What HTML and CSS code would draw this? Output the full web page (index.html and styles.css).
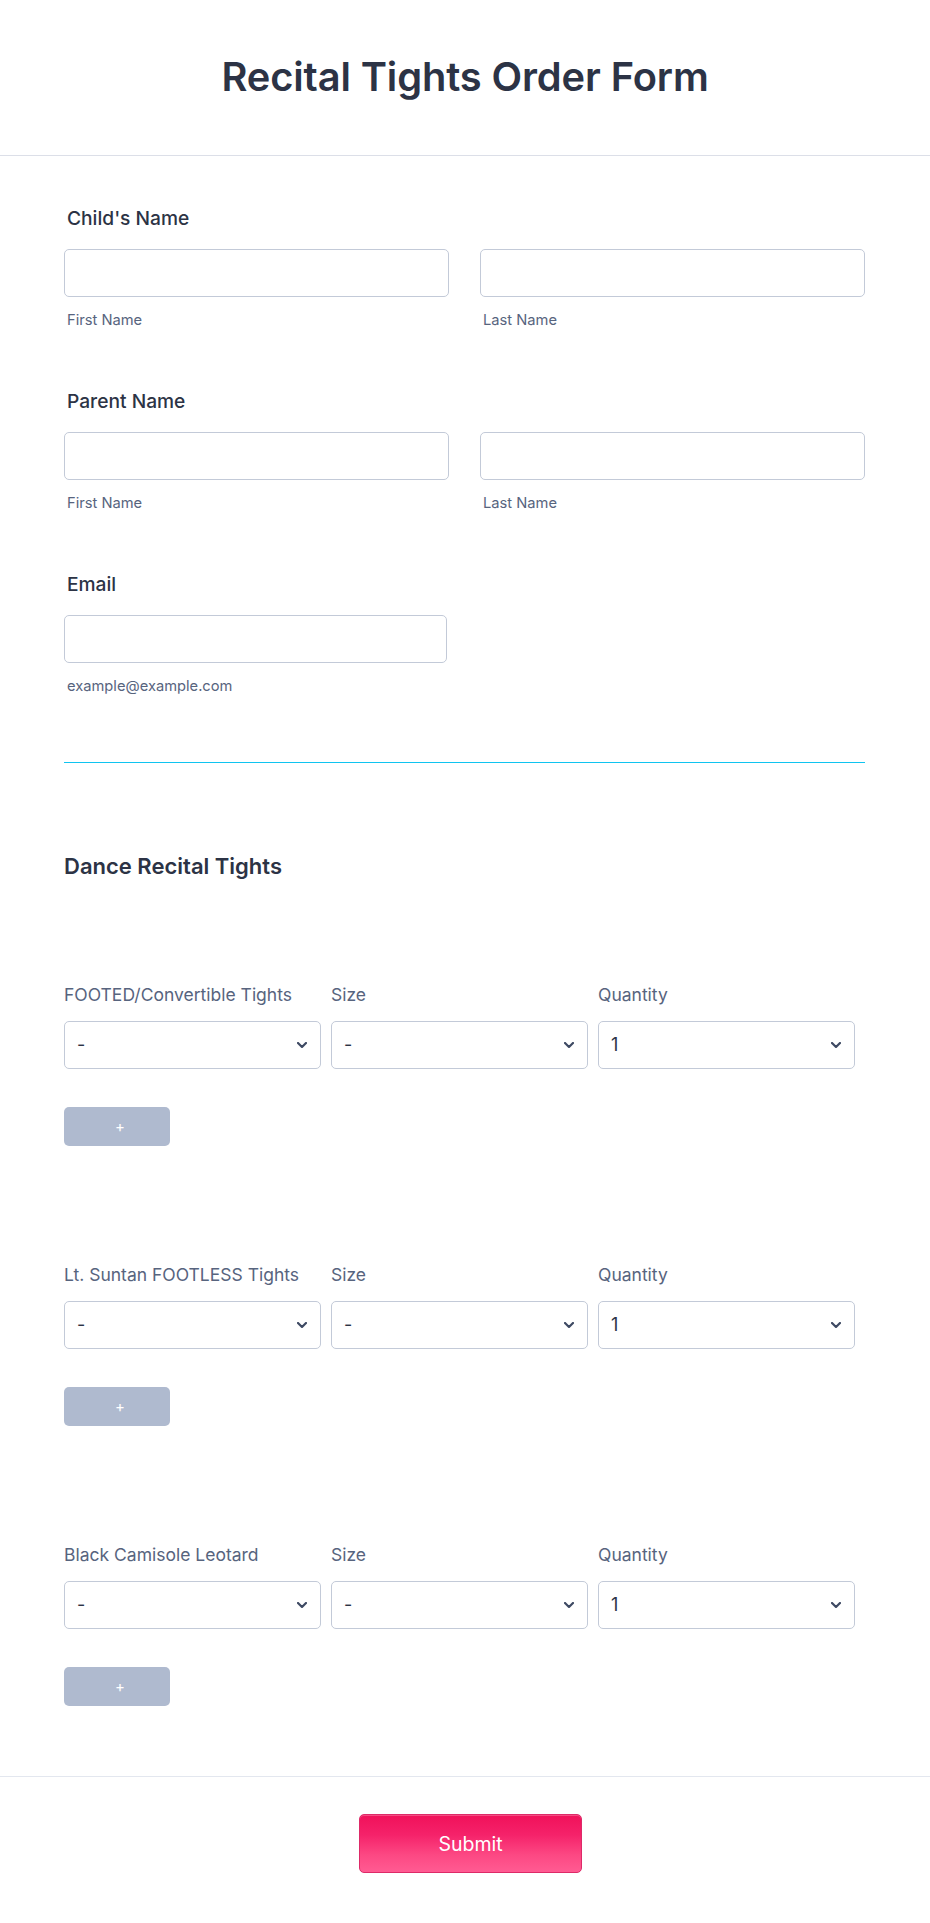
FILE: index.html
```html
<!DOCTYPE html>
<html lang="en">
<head>
<meta charset="utf-8">
<title>Recital Tights Order Form</title>
<link rel="stylesheet" href="styles.css">
</head>
<body>
<div class="page">
  <header class="header">
    <h1 class="title">Recital Tights Order Form</h1>
  </header>

  <main class="form">
    <div class="field">
      <div class="label">Child's Name</div>
      <div class="pair">
        <div class="col">
          <div class="input"></div>
          <div class="sublabel">First Name</div>
        </div>
        <div class="col">
          <div class="input"></div>
          <div class="sublabel">Last Name</div>
        </div>
      </div>
    </div>

    <div class="field">
      <div class="label">Parent Name</div>
      <div class="pair">
        <div class="col">
          <div class="input"></div>
          <div class="sublabel">First Name</div>
        </div>
        <div class="col">
          <div class="input"></div>
          <div class="sublabel">Last Name</div>
        </div>
      </div>
    </div>

    <div class="field">
      <div class="label">Email</div>
      <div class="single">
        <div class="input"></div>
        <div class="sublabel">example@example.com</div>
      </div>
    </div>

    <div class="divider"></div>

    <h2 class="section-title">Dance Recital Tights</h2>

    <div class="product">
      <div class="product-row">
        <div class="pcol">
          <div class="plabel">FOOTED/Convertible Tights</div>
          <div class="select"><span>-</span><svg class="chev" width="10" height="6" viewBox="0 0 10 6"><polyline points="1,1 5,5 9,1"/></svg></div>
        </div>
        <div class="pcol">
          <div class="plabel">Size</div>
          <div class="select"><span>-</span><svg class="chev" width="10" height="6" viewBox="0 0 10 6"><polyline points="1,1 5,5 9,1"/></svg></div>
        </div>
        <div class="pcol">
          <div class="plabel">Quantity</div>
          <div class="select"><span>1</span><svg class="chev" width="10" height="6" viewBox="0 0 10 6"><polyline points="1,1 5,5 9,1"/></svg></div>
        </div>
      </div>
      <div class="add-btn">+</div>
    </div>

    <div class="product">
      <div class="product-row">
        <div class="pcol">
          <div class="plabel">Lt. Suntan FOOTLESS Tights</div>
          <div class="select"><span>-</span><svg class="chev" width="10" height="6" viewBox="0 0 10 6"><polyline points="1,1 5,5 9,1"/></svg></div>
        </div>
        <div class="pcol">
          <div class="plabel">Size</div>
          <div class="select"><span>-</span><svg class="chev" width="10" height="6" viewBox="0 0 10 6"><polyline points="1,1 5,5 9,1"/></svg></div>
        </div>
        <div class="pcol">
          <div class="plabel">Quantity</div>
          <div class="select"><span>1</span><svg class="chev" width="10" height="6" viewBox="0 0 10 6"><polyline points="1,1 5,5 9,1"/></svg></div>
        </div>
      </div>
      <div class="add-btn">+</div>
    </div>

    <div class="product">
      <div class="product-row">
        <div class="pcol">
          <div class="plabel">Black Camisole Leotard</div>
          <div class="select"><span>-</span><svg class="chev" width="10" height="6" viewBox="0 0 10 6"><polyline points="1,1 5,5 9,1"/></svg></div>
        </div>
        <div class="pcol">
          <div class="plabel">Size</div>
          <div class="select"><span>-</span><svg class="chev" width="10" height="6" viewBox="0 0 10 6"><polyline points="1,1 5,5 9,1"/></svg></div>
        </div>
        <div class="pcol">
          <div class="plabel">Quantity</div>
          <div class="select"><span>1</span><svg class="chev" width="10" height="6" viewBox="0 0 10 6"><polyline points="1,1 5,5 9,1"/></svg></div>
        </div>
      </div>
      <div class="add-btn">+</div>
    </div>
  </main>

  <footer class="footer">
    <button class="submit" type="button">Submit</button>
  </footer>
</div>
</body>
</html>
```

FILE: styles.css
```css
* { box-sizing: border-box; }

html, body {
  margin: 0;
  padding: 0;
  background: #ffffff;
}

body {
  font-family: Inter, "Noto Sans", "Liberation Sans", sans-serif;
  color: #2c3345;
}

.page {
  width: 930px;
  min-height: 1923px;
  background: #ffffff;
}

.header {
  height: 156px;
  border-bottom: 1px solid #dcdfe8;
  display: flex;
  align-items: center;
  justify-content: center;
  padding-bottom: 2px;
}

.title {
  margin: 0;
  font-size: 39.8px;
  line-height: 48px;
  font-weight: 600;
  color: #2c3345;
  letter-spacing: -0.1px;
}

.form {
  padding: 50px 65px 0 64px;
}

.field {
  margin-bottom: 60px;
}

.label {
  font-size: 19.2px;
  line-height: 24px;
  font-weight: 500;
  color: #2c3345;
  padding-left: 3px;
  margin-bottom: 19px;
}

.pair {
  display: flex;
  gap: 31px;
}

.col {
  width: 385px;
}

.single {
  width: 383px;
}

.input {
  height: 48px;
  border: 1px solid #c3cad8;
  border-radius: 5px;
  background: #ffffff;
}

.sublabel {
  margin-top: 14px;
  font-size: 14.7px;
  line-height: 18px;
  color: #57647e;
  padding-left: 3px;
}

.divider {
  height: 1px;
  background: #10c4f0;
  margin-top: 67px;
}

.section-title {
  margin: 89px 0 0 0;
  font-size: 22px;
  line-height: 28px;
  font-weight: 600;
  color: #2c3345;
}

.product {
  margin-top: 104px;
}

.product + .product {
  margin-top: 118px;
}

.product-row {
  display: flex;
}

.pcol {
  width: 267px;
  padding-right: 10px;
}

.plabel {
  font-size: 17.5px;
  line-height: 22px;
  color: #57647e;
  white-space: nowrap;
  margin-bottom: 15px;
}

.select {
  height: 48px;
  border: 1px solid #c3cad8;
  border-radius: 5px;
  background: #ffffff;
  display: flex;
  align-items: center;
  justify-content: space-between;
  padding: 0 13px 0 12px;
  font-size: 18px;
  color: #2c3345;
}

.select span {
  line-height: 22px;
}

.chev polyline {
  fill: none;
  stroke: #3e4a63;
  stroke-width: 2.2;
  stroke-linecap: round;
  stroke-linejoin: round;
}

.add-btn {
  margin-top: 38px;
  width: 106px;
  height: 39px;
  border-radius: 5px;
  background: #afbacf;
  color: #ffffff;
  font-size: 15px;
  display: flex;
  align-items: center;
  justify-content: center;
  padding-left: 6px;
}

.footer {
  margin-top: 70px;
  border-top: 1px solid #e3e7ef;
  padding: 37px 0 0 11px;
  display: flex;
  justify-content: center;
}

.submit {
  width: 223px;
  height: 59px;
  border: 1px solid #dd2a68;
  border-radius: 5px;
  background: linear-gradient(180deg, #f0115a 0%, #f5226a 35%, #fc4883 70%, #ff5b92 100%);
  box-shadow: inset 0 1px 0 rgba(255, 255, 255, 0.25);
  color: #ffffff;
  font-family: Inter, "Noto Sans", "Liberation Sans", sans-serif;
  font-size: 19.5px;
  font-weight: 400;
  cursor: pointer;
}
```
